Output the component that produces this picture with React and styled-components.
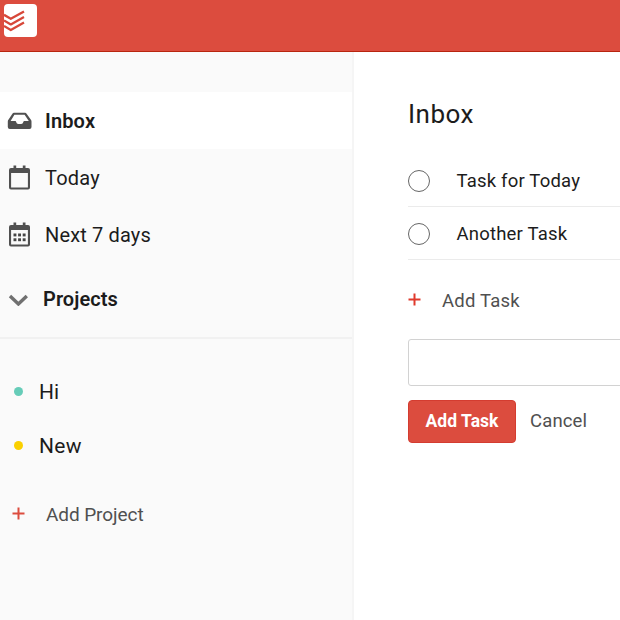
import React from "react";
import styled, { createGlobalStyle } from "styled-components";

const GlobalStyle = createGlobalStyle`
  *, *::before, *::after { box-sizing: border-box; }
  body { margin: 0; background: #fff; font-family: Roboto, sans-serif; color: #202020; }
  button, input { font-family: inherit; }
`;

const Page = styled.div`
  width: 620px;
  height: 620px;
  overflow: hidden;
  display: flex;
  flex-direction: column;
`;

const Header = styled.header`
  flex: 0 0 52px;
  padding: 4px 0 0 4px;
  background: #dc4c3e;
  border-bottom: 1px solid #b8250f;
`;

const Body = styled.div`
  flex: 1;
  display: flex;
  min-height: 0;
`;

const Sidebar = styled.aside`
  flex: 0 0 354px;
  padding-top: 40px;
  background: #fafafa;
  border-right: 2px solid #f5f5f5;
`;

const Label = styled.span`
  font-size: ${(p) => p.$size}px;
  font-weight: ${(p) => p.$weight || 400};
  letter-spacing: ${(p) => p.$spacing || 0}px;
  color: ${(p) => p.$color || "#1c1c1c"};
  line-height: 1.2;
  white-space: nowrap;
`;

const NavItem = styled.a`
  display: flex;
  align-items: center;
  height: 57px;
  padding-left: 7px;
  gap: 12px;
  background: ${(p) => (p.$active ? "#fff" : "transparent")};

  svg { flex: none; }
`;

const ProjectsHeader = styled.div`
  display: flex;
  align-items: center;
  height: 76px;
  padding: 0 0 3px 8px;
  gap: 14px;
  border-bottom: 2px solid #f1f1f1;
`;

const ProjectList = styled.div`
  padding-top: 27px;
`;

const Project = styled.div`
  display: flex;
  align-items: center;
  height: 54px;
  padding-left: 14px;
  gap: 16px;
`;

const Dot = styled.span`
  width: 9px;
  height: 9px;
  margin-top: -3px;
  border-radius: 50%;
  background: ${(p) => p.$color};
`;

const AddProject = styled.div`
  display: flex;
  align-items: center;
  height: 54px;
  margin-top: 14px;
  padding-left: 12px;
  gap: 21px;

  svg { margin-top: -3px; }
`;

const Main = styled.main`
  flex: 1;
  min-width: 0;
  padding: 40px 0 0 54px;
`;

const Title = styled.div`
  display: flex;
  align-items: center;
  height: 45px;
`;

const TaskList = styled.div`
  padding-top: 17px;
`;

const Task = styled.div`
  display: flex;
  align-items: center;
  height: 53px;
  padding-top: 3px;
  gap: 27px;
  border-bottom: 1px solid #ebebeb;
`;

const Check = styled.span`
  flex: none;
  width: 22px;
  height: 22px;
  margin: -2px 0 0 -0.5px;
  border: 1px solid #666;
  border-radius: 50%;
`;

const AddTask = styled.div`
  display: flex;
  align-items: center;
  height: 40px;
  margin-top: 21px;
  gap: 21px;

  svg { margin-top: -3px; }
`;

const TaskInput = styled.input`
  display: block;
  width: 260px;
  height: 47px;
  margin-top: 18px;
  border: 1px solid #d2d2d2;
  border-radius: 3px;
  background: #fff;
  outline: none;
`;

const Actions = styled.div`
  display: flex;
  align-items: center;
  margin-top: 14px;
  gap: 14px;
`;

const Submit = styled.button`
  width: 108px;
  height: 43px;
  padding: 0 0 1px;
  border: 1px solid #d43c30;
  border-radius: 4px;
  background: #dc4c3e;
`;

const Cancel = styled.button`
  padding: 0;
  border: 0;
  background: none;
`;

const Logo = () => (
  <svg width="33" height="33" viewBox="0 0 33 33" fill="none" display="block">
    <rect width="33" height="33" rx="4" fill="#fff" />
    <g stroke="#d74739" strokeWidth="2.3" strokeLinejoin="round">
      <path d="M0 10.800 6.800 14.800 20 7.400" />
      <path d="M0 16.400 6.800 20.400 20 13" />
      <path d="M0 22 6.800 26 20 18.600" />
    </g>
  </svg>
);

const InboxIcon = () => (
  <svg width="26" height="18" viewBox="0 0 26 18" display="block">
    <path
      fillRule="evenodd"
      fill="#505050"
      d="M7 .8h11c.7 0 1.200.3 1.600.9l4.300 6c.4.6.6 1.100.6 1.800V15a2 2 0 0 1-2 2H2.800a2 2 0 0 1-2-2V9.500c0-.7.200-1.200.6-1.800l4-6C5.800 1.100 6.300.8 7 .8ZM7.400 2.800 3.600 8.900H8c.8 0 1 .4 1.200 1.100.3 1.200 1 1.900 2.100 1.900h2.900c1.100 0 1.800-.7 2.100-1.900.200-.7.400-1.100 1.200-1.100h4.300l-4.200-6.100Z"
    />
  </svg>
);

const CalendarIcon = ({ dots }) => (
  <svg width="26" height="26" viewBox="0 0.5 26 26" display="block">
    <path
      fillRule="evenodd"
      fill="#505050"
      d="M6.500 1h2.700v2.600h6.600V1h2.700v2.600h2.500A2 2 0 0 1 23 5.600v17.400a2 2 0 0 1-2 2H4a2 2 0 0 1-2-2V5.600a2 2 0 0 1 2-2h2.500ZM4.100 8.400v14.500h16.800V8.400Z"
    />
    {dots &&
      [12, 16.800].map((y) =>
        [6.500, 11.100, 15.700].map((x) => (
          <rect key={`${x}-${y}`} x={x} y={y} width="2.900" height="2.900" fill="#454545" />
        ))
      )}
  </svg>
);

const Chevron = () => (
  <svg width="21" height="14" viewBox="0 0 21 14" fill="none" display="block">
    <path d="M2 4 10.400 12 18.800 4" stroke="#707070" strokeWidth="3.400" />
  </svg>
);

const Plus = ({ color }) => (
  <svg width="13" height="13" viewBox="0 0 13 13" display="block">
    <path d="M6.500.5v12M.5 6.500h12" stroke={color} strokeWidth="2" />
  </svg>
);

export default function App() {
  return (
    <>
      <GlobalStyle />
      <Page>
        <Header>
          <Logo />
        </Header>
        <Body>
          <Sidebar>
            <NavItem $active>
              <InboxIcon />
              <Label $size={20} $weight={600} $spacing={0.15}>Inbox</Label>
            </NavItem>
            <NavItem>
              <CalendarIcon />
              <Label $size={20} $spacing={0.2}>Today</Label>
            </NavItem>
            <NavItem>
              <CalendarIcon dots />
              <Label $size={20} $spacing={0.15}>Next 7 days</Label>
            </NavItem>
            <ProjectsHeader>
              <Chevron />
              <Label $size={20} $weight={600} $spacing={0.05}>Projects</Label>
            </ProjectsHeader>
            <ProjectList>
              <Project>
                <Dot $color="#66ccb8" />
                <Label $size={21}>Hi</Label>
              </Project>
              <Project>
                <Dot $color="#fad000" />
                <Label $size={21} $spacing={0.3}>New</Label>
              </Project>
            </ProjectList>
            <AddProject>
              <Plus color="#dc4c3e" />
              <Label $size={19} $spacing={-0.08} $color="#505050">Add Project</Label>
            </AddProject>
          </Sidebar>
          <Main>
            <Title>
              <Label $size={26} $spacing={0.5}>Inbox</Label>
            </Title>
            <TaskList>
              <Task>
                <Check />
                <Label $size={18.500} $spacing={0.2}>Task for Today</Label>
              </Task>
              <Task>
                <Check />
                <Label $size={18.500} $spacing={0.2}>Another Task</Label>
              </Task>
            </TaskList>
            <AddTask>
              <Plus color="#e03a2c" />
              <Label $size={18.500} $spacing={0.2} $color="#505050">Add Task</Label>
            </AddTask>
            <TaskInput />
            <Actions>
              <Submit>
                <Label $size={17.500} $weight={700} $spacing={0.05} $color="#fff">Add Task</Label>
              </Submit>
              <Cancel>
                <Label $size={18.500} $spacing={0.15} $color="#505050">Cancel</Label>
              </Cancel>
            </Actions>
          </Main>
        </Body>
      </Page>
    </>
  );
}
